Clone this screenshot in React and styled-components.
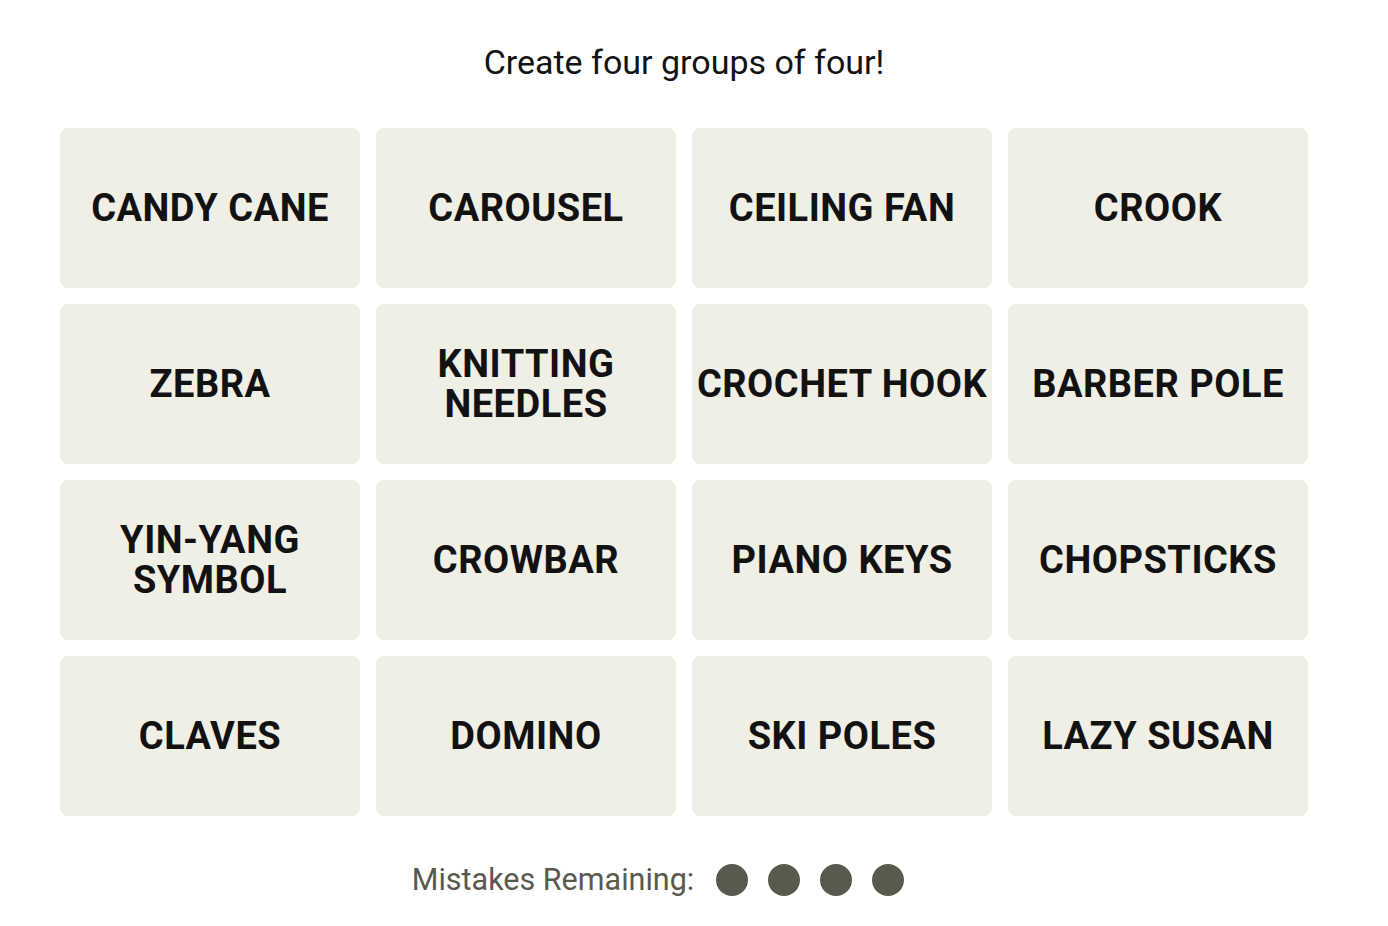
import React from "react";
import styled, { createGlobalStyle } from "styled-components";

const Global = createGlobalStyle`
  html, body { margin: 0; padding: 0; background: #ffffff; }
  body { font-family: "Liberation Sans", Arial, sans-serif; color: #121212; }
`;

const Page = styled.div`
  width: 1248px;
  margin-left: 60px;
  display: flex;
  flex-direction: column;
  align-items: center;
`;

const Title = styled.h1`
  margin: 40px 0 0;
  height: 48px;
  line-height: 44px;
  font-size: 34px;
  font-weight: 400;
  font-family: Roboto, "Liberation Sans", sans-serif;
  color: #121212;
`;

const Grid = styled.div`
  margin-top: 40px;
  display: grid;
  grid-template-columns: repeat(4, 300px);
  grid-auto-rows: 160px;
  gap: 16px;
`;

const Tile = styled.div`
  background: #efefe6;
  border-radius: 8px;
  display: flex;
  align-items: center;
  justify-content: center;
  text-align: center;
  font-family: Roboto, "Liberation Sans", sans-serif;
  font-weight: 700;
  font-size: 38px;
  line-height: 40px;
  text-transform: uppercase;
  color: #121212;
  white-space: pre-line;
  letter-spacing: 0.5px;
`;

const Footer = styled.div`
  margin-top: 46px;
  display: flex;
  align-items: center;
  gap: 20px;
  padding-right: 52px;
`;

const FooterLabel = styled.span`
  font-family: Roboto, "Liberation Sans", sans-serif;
  font-size: 30.5px;
  color: #5a594e;
  margin-right: 2px;
`;

const Dot = styled.span`
  width: 32px;
  height: 32px;
  border-radius: 50%;
  background: #5a594e;
  display: inline-block;
`;

const words = [
  "CANDY CANE", "CAROUSEL", "CEILING FAN", "CROOK",
  "ZEBRA", "KNITTING\nNEEDLES", "CROCHET HOOK", "BARBER POLE",
  "YIN-YANG\nSYMBOL", "CROWBAR", "PIANO KEYS", "CHOPSTICKS",
  "CLAVES", "DOMINO", "SKI POLES", "LAZY SUSAN",
];

export default function App() {
  return (
    <>
      <Global />
      <Page>
        <Title>Create four groups of four!</Title>
        <Grid>
          {words.map((w) => (
            <Tile key={w}>{w}</Tile>
          ))}
        </Grid>
        <Footer>
          <FooterLabel>Mistakes Remaining:</FooterLabel>
          <Dot />
          <Dot />
          <Dot />
          <Dot />
        </Footer>
      </Page>
    </>
  );
}
